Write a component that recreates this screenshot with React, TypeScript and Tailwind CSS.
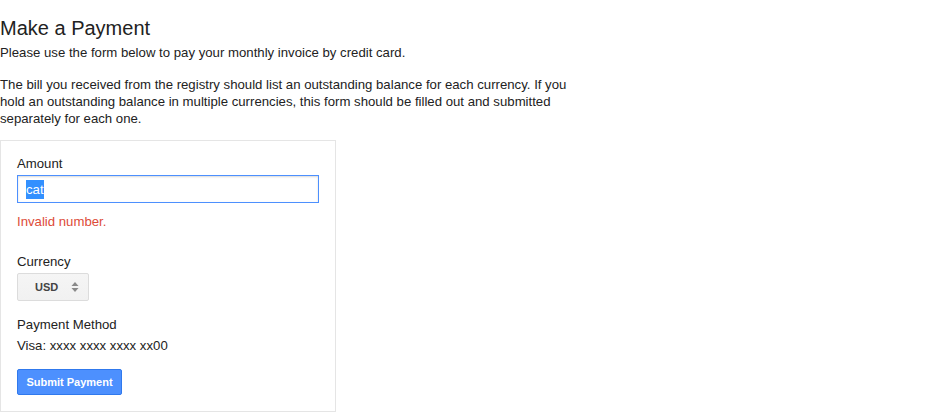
import React from "react";

export default function App() {
  return (
    <div className="min-h-[413px] w-[941px] bg-white text-[#222] font-['Liberation_Sans',Arial,sans-serif] text-[13.2px] leading-[17px]">
      <h1 className="pt-[16px] text-[20px] leading-[24px] font-normal text-[#222]">Make a Payment</h1>
      <p className="mt-[4px]">Please use the form below to pay your monthly invoice by credit card.</p>
      <p className="mt-[15px] w-[580px]">
        The bill you received from the registry should list an outstanding balance for each currency. If you hold an
        outstanding balance in multiple currencies, this form should be filled out and submitted separately for each one.
      </p>
      <div className="mt-[13px] w-[336px] border border-[#e5e5e5] px-[16px] pt-[14px] pb-[16px]">
        <div>Amount</div>
        <div className="mt-[3px] flex h-[28px] w-[302px] items-center border border-[#4d90fe] pl-[8px] shadow-[inset_0_1px_2px_rgba(0,0,0,0.15)]">
          <span className="bg-[#3390ff] leading-[19px] text-white">cat</span>
        </div>
        <div className="mt-[10px] text-[#dd4b39]">Invalid number.</div>
        <div className="mt-[23px]">Currency</div>
        <div className="mt-[3px] flex h-[28px] w-[72px] items-center rounded-[2px] border border-[#dcdcdc] bg-gradient-to-b from-[#f5f5f5] to-[#f1f1f1] pl-[17px] pr-[9px]">
          <span className="text-[11px] font-bold text-[#444]">USD</span>
          <svg className="ml-auto" width="8" height="12" viewBox="0 0 8 12">
            <path d="M4 1 L7.5 5 L0.5 5 Z" fill="#8a8a8a" />
            <path d="M4 11 L7.5 7 L0.5 7 Z" fill="#8a8a8a" />
          </svg>
        </div>
        <div className="mt-[15px]">Payment Method</div>
        <div className="mt-[4px]">Visa: xxxx xxxx xxxx xx00</div>
        <button className="mt-[15px] flex h-[26px] w-[105px] items-center justify-center rounded-[2px] border border-[#3079ed] bg-[#4d90fe] text-[11px] font-bold text-white">
          Submit Payment
        </button>
      </div>
    </div>
  );
}
